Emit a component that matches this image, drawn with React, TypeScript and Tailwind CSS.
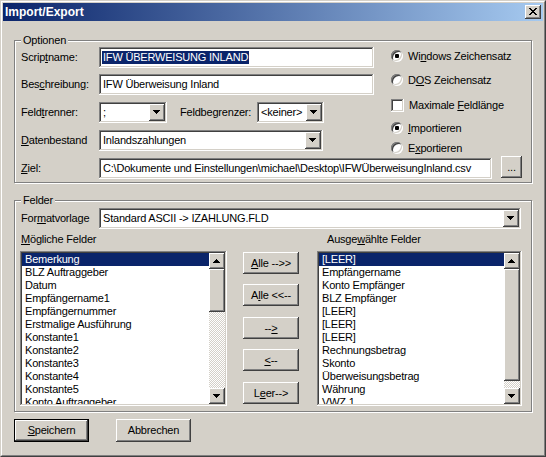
import type { ReactNode } from "react";

// Win2000-style 3D edges
const raised =
  "shadow-[inset_-1px_-1px_#404040,inset_1px_1px_#fff,inset_-2px_-2px_#808080,inset_2px_2px_#d4d0c8]";
const sunken =
  "shadow-[inset_-1px_-1px_#fff,inset_1px_1px_#808080,inset_-2px_-2px_#d4d0c8,inset_2px_2px_#404040]";

const possibleFields = [
  "Bemerkung",
  "BLZ Auftraggeber",
  "Datum",
  "Empfängername1",
  "Empfängernummer",
  "Erstmalige Ausführung",
  "Konstante1",
  "Konstante2",
  "Konstante3",
  "Konstante4",
  "Konstante5",
  "Konto Auftraggeber",
];

const selectedFields = [
  "[LEER]",
  "Empfängername",
  "Konto Empfänger",
  "BLZ Empfänger",
  "[LEER]",
  "[LEER]",
  "[LEER]",
  "Rechnungsbetrag",
  "Skonto",
  "Überweisungsbetrag",
  "Währung",
  "VWZ 1",
];

function K({ children }: { children: ReactNode }) {
  return <span className="underline">{children}</span>;
}

function ArrowDown() {
  return (
    <svg width="7" height="4" viewBox="0 0 7 4" shapeRendering="crispEdges">
      <path d="M0 0h7v1H0zM1 1h5v1H1zM2 2h3v1H2zM3 3h1v1H3z" fill="#000" />
    </svg>
  );
}

function ArrowUp() {
  return (
    <svg width="7" height="4" viewBox="0 0 7 4" shapeRendering="crispEdges">
      <path d="M3 0h1v1H3zM2 1h3v1H2zM1 2h5v1H1zM0 3h7v1H0z" fill="#000" />
    </svg>
  );
}

function CloseGlyph() {
  return (
    <svg width="8" height="7" viewBox="0 0 8 7" shapeRendering="crispEdges">
      <path
        d="M0 0h2v1H0zM6 0h2v1H6zM1 1h2v1H1zM5 1h2v1H5zM2 2h4v1H2zM3 3h2v1H3zM2 4h4v1H2zM1 5h2v1H1zM5 5h2v1H5zM0 6h2v1H0zM6 6h2v1H6z"
        fill="#000"
      />
    </svg>
  );
}

function GroupBox({ title, className = "", children }: { title: string; className?: string; children: ReactNode }) {
  return (
    <fieldset className={`border border-[#808080] shadow-[inset_1px_1px_#fff,1px_1px_#fff] ${className}`}>
      <legend className="ml-[6px] px-[2px] h-[13px] leading-[13px] bg-[#d4d0c8]">{title}</legend>
      {children}
    </fieldset>
  );
}

function TextBox({ className = "", children }: { className?: string; children?: ReactNode }) {
  return (
    <div className={`h-[21px] bg-white p-[2px] flex items-center whitespace-nowrap overflow-hidden ${sunken} ${className}`}>
      {children}
    </div>
  );
}

function ComboBox({ className = "", value }: { className?: string; value: string }) {
  return (
    <div className={`h-[21px] bg-white p-[2px] flex ${sunken} ${className}`}>
      <div className="flex-1 pl-[2px] flex items-center whitespace-nowrap overflow-hidden">{value}</div>
      <div className={`w-[16px] h-[17px] bg-[#d4d0c8] pl-[4px] pt-[6px] ${raised}`}>
        <ArrowDown />
      </div>
    </div>
  );
}

function Button({ className = "", children }: { className?: string; children: ReactNode }) {
  return (
    <div className={`bg-[#d4d0c8] flex items-center justify-center whitespace-nowrap ${raised} ${className}`}>
      {children}
    </div>
  );
}

function Radio({ checked, children, className = "" }: { checked?: boolean; children: ReactNode; className?: string }) {
  return (
    <div className={`h-[16px] flex items-center ${className}`}>
      <div className={`w-[12px] h-[12px] rounded-full bg-white flex items-center justify-center ${sunken}`}>
        {checked && <div className="w-[4px] h-[4px] rounded-[1px] bg-black" />}
      </div>
      <span className="ml-[5px]">{children}</span>
    </div>
  );
}

function ScrollBar({ thumb }: { thumb: string }) {
  return (
    <div className="w-[16px] h-full flex flex-col">
      <div className={`h-[16px] bg-[#d4d0c8] pl-[4px] pt-[6px] ${raised}`}>
        <ArrowUp />
      </div>
      <div className={`bg-[#d4d0c8] ${raised} ${thumb}`} />
      <div className="flex-1 bg-[conic-gradient(#fff_25%,#d4d0c8_0_50%,#fff_0_75%,#d4d0c8_0)] bg-size-[2px_2px]" />
      <div className={`h-[16px] bg-[#d4d0c8] pl-[4px] pt-[6px] ${raised}`}>
        <ArrowDown />
      </div>
    </div>
  );
}

function ListBox({ items, thumb, className = "" }: { items: string[]; thumb: string; className?: string }) {
  return (
    <div className={`h-[155px] bg-white p-[2px] flex ${sunken} ${className}`}>
      <div className="flex-1 overflow-hidden">
        {items.map((item, i) => (
          <div
            key={i}
            className={`h-[13px] leading-[13px] pl-[3px] whitespace-nowrap ${i === 0 ? "bg-[#0a246a] text-white" : ""}`}
          >
            {item}
          </div>
        ))}
      </div>
      <ScrollBar thumb={thumb} />
    </div>
  );
}

export default function App() {
  return (
    <div className="w-[546px] h-[457px] bg-[#d4d0c8] border border-[#d4d0c8] border-r-[#404040] border-b-[#404040] font-['Liberation_Sans',Arial,sans-serif] text-[11px] leading-[13px] tracking-[-0.2px] text-black">
      <div className="h-full border border-white border-r-[#808080] border-b-[#808080] p-[1px] flex flex-col">
        {/* caption */}
        <div className="h-[18px] shrink-0 flex items-center justify-between pl-[2px] pr-[2px] bg-linear-to-r/srgb from-[#0a246a] to-[#a6caf0]">
          <span className="text-white font-bold text-[12px] leading-[14px] tracking-normal">Import/Export</span>
          <div className={`w-[16px] h-[14px] bg-[#d4d0c8] pl-[4px] pt-[3px] ${raised}`}>
            <CloseGlyph />
          </div>
        </div>

        <div className="px-[11px] pt-[13px] flex flex-col">
          <GroupBox title="Optionen">
            <div className="pl-[6px] pb-[3px]">
              <div className="flex h-[111px]">
                <div className="w-[353px] flex flex-col">
                  <div className="h-[21px] flex items-center">
                    <span className="w-[78px]">
                      Scrip<K>t</K>name:
                    </span>
                    <TextBox className="w-[275px] pl-[3px]">
                      <span className="bg-[#0a246a] text-white px-[1px] leading-[13px]">IFW ÜBERWEISUNG INLAND</span>
                    </TextBox>
                  </div>
                  <div className="mt-[6px] h-[21px] flex items-center">
                    <span className="w-[78px]">
                      Bes<K>c</K>hreibung:
                    </span>
                    <TextBox className="w-[275px] pl-[4px]">IFW Überweisung Inland</TextBox>
                  </div>
                  <div className="mt-[7px] h-[21px] flex items-center">
                    <span className="w-[78px]">
                      Feld<K>t</K>renner:
                    </span>
                    <ComboBox className="w-[68px]" value=";" />
                    <span className="ml-[13px] w-[77px]">Feldbegrenzer:</span>
                    <ComboBox className="w-[67px]" value="<keiner>" />
                  </div>
                  <div className="mt-[7px] h-[21px] flex items-center">
                    <span className="w-[78px]">
                      <K>D</K>atenbestand
                    </span>
                    <ComboBox className="w-[224px]" value="Inlandszahlungen" />
                  </div>
                </div>

                <div className="ml-[17px] flex flex-col">
                  <Radio checked className="mt-[1px]">
                    Wi<K>n</K>dows Zeichensatz
                  </Radio>
                  <Radio className="mt-[8px]">
                    D<K>O</K>S Zeichensatz
                  </Radio>
                  <div className="mt-[9px] h-[16px] flex items-center">
                    <div className={`w-[13px] h-[13px] bg-white ${sunken}`} />
                    <span className="ml-[5px]">
                      Maximale <K>F</K>eldlänge
                    </span>
                  </div>
                  <Radio checked className="mt-[7px]">
                    <K>I</K>mportieren
                  </Radio>
                  <Radio className="mt-[4px]">
                    E<K>x</K>portieren
                  </Radio>
                </div>
              </div>

              <div className="h-[21px] flex items-start">
                <span className="w-[78px] h-[21px] flex items-center">
                  <K>Z</K>iel:
                </span>
                <TextBox className="w-[393px] pl-[4px]">
                  C:\Dokumente und Einstellungen\michael\Desktop\IFWÜberweisungInland.csv
                </TextBox>
                <Button className="ml-[9px] -mt-[2px] w-[21px] h-[22px]">...</Button>
              </div>
            </div>
          </GroupBox>

          <GroupBox title="Felder" className="mt-[11px]">
            <div className="pl-[6px] pb-[5px]">
              <div className="mt-[1px] h-[21px] flex items-center">
                <span className="w-[78px]">
                  For<K>m</K>atvorlage
                </span>
                <ComboBox className="w-[422px]" value="Standard ASCII -> IZAHLUNG.FLD" />
              </div>

              <div className="pt-[4px] h-[17px] flex">
                <span className="w-[306px]">
                  <K>M</K>ögliche Felder
                </span>
                <span>
                  Ausge<K>w</K>ählte Felder
                </span>
              </div>

              <div className="mt-[5px] flex">
                <ListBox items={possibleFields} thumb="h-[43px]" className="w-[207px] -ml-[1px]" />

                <div className="ml-[16px] w-[56px] flex flex-col">
                  <Button className="h-[22px] mt-[1px]">
                    <K>A</K>lle --&gt;&gt;
                  </Button>
                  <Button className="h-[22px] mt-[10px]">
                    A<K>l</K>le &lt;&lt;--
                  </Button>
                  <Button className="h-[22px] mt-[11px]">
                    --<K>&gt;</K>
                  </Button>
                  <Button className="h-[22px] mt-[10px]">
                    <K>&lt;</K>--
                  </Button>
                  <Button className="h-[22px] mt-[11px]">
                    L<K>e</K>er--&gt;
                  </Button>
                </div>

                <ListBox items={selectedFields} thumb="h-[112px]" className="ml-[18px] w-[205px]" />
              </div>
            </div>
          </GroupBox>

          <div className="mt-[7px] flex">
            <div className="w-[75px] h-[23px] border border-black">
              <Button className="w-full h-full">
                <K>S</K>peichern
              </Button>
            </div>
            <Button className="ml-[27px] w-[75px] h-[23px]">Abbrechen</Button>
          </div>
        </div>
      </div>
    </div>
  );
}
